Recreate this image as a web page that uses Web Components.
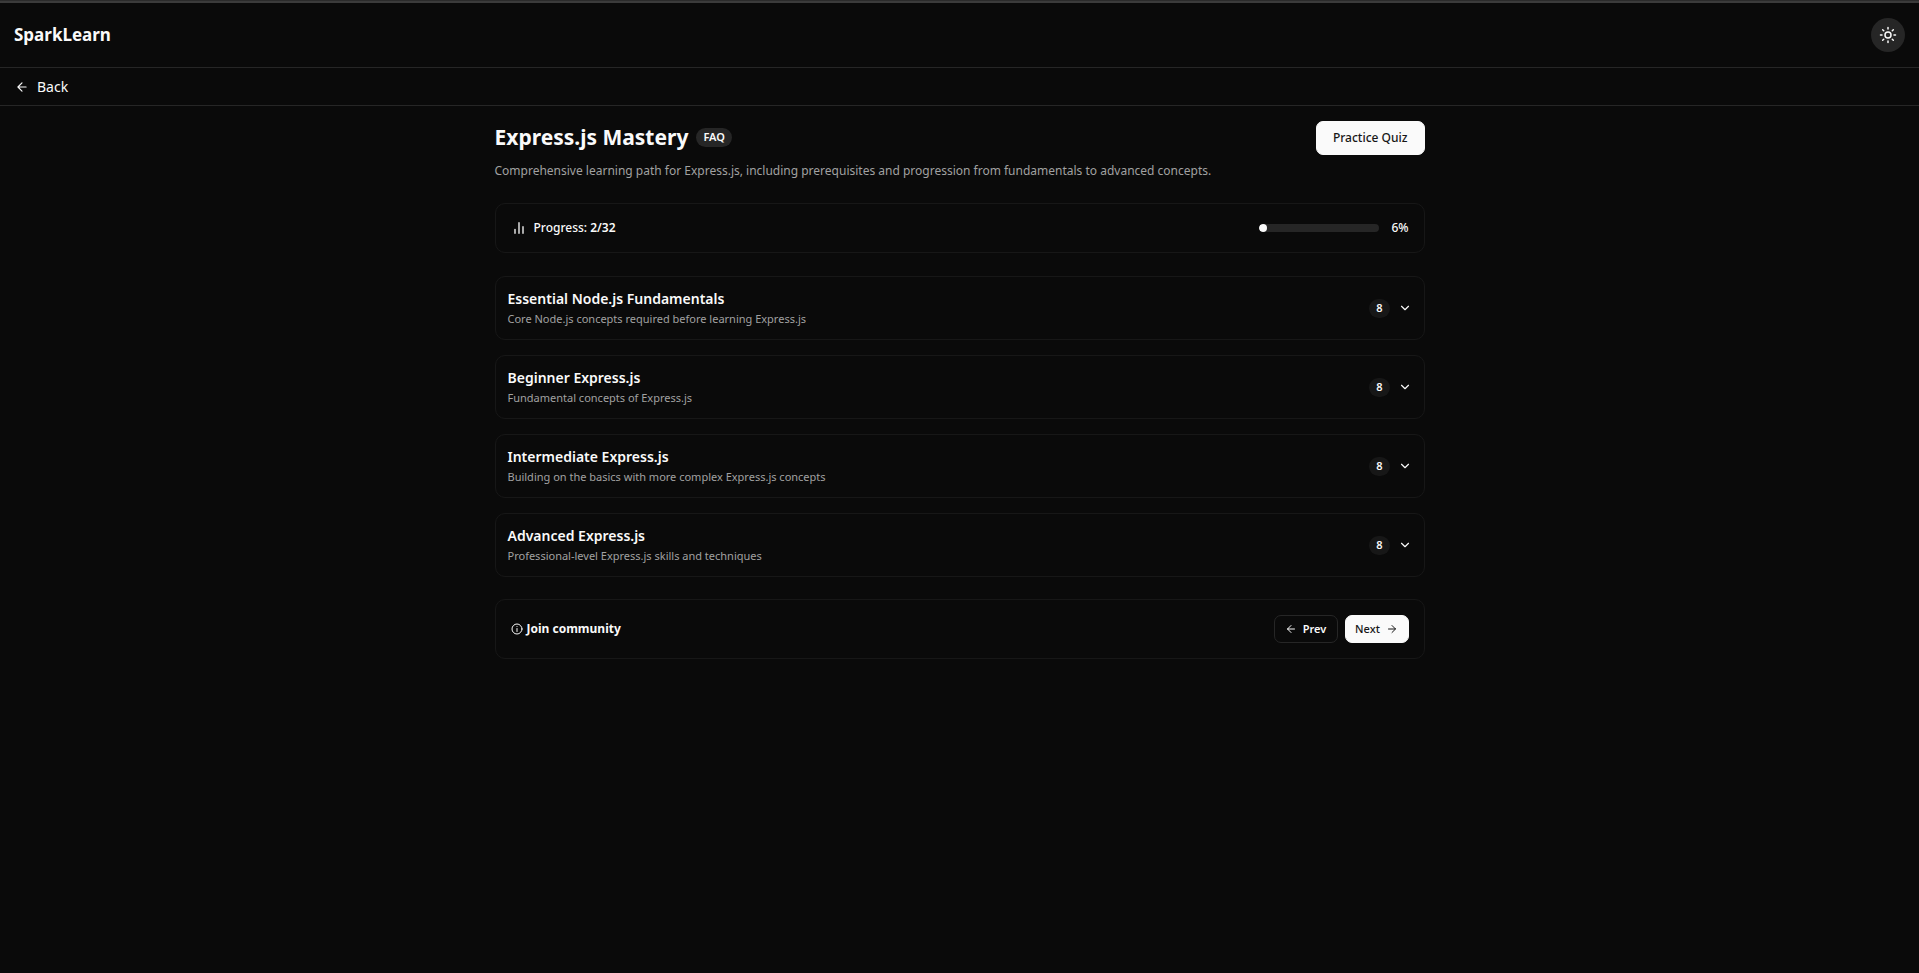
<!DOCTYPE html>
<html lang="en">
<head>
<meta charset="utf-8">
<meta name="viewport" content="width=device-width, initial-scale=1">
<title>SparkLearn</title>
<style>
	:root {
		--bg: #0a0a0a;
		--fg: #fafafa;
		--muted: #a1a1a1;
		--line: #262626;
		--card-line: #171717;
		--chip: #262626;
	}

	body {
		margin: 0;
		min-height: 100vh;
		background: var(--bg);
		color: var(--fg);
		font: 12px/18px "Noto Sans", "Open Sans", sans-serif;
	}
</style>
</head>
<body>
<learn-app></learn-app>

<script>
const icons = {
	sun: '<circle cx="12" cy="12" r="4"/><path d="M12 2v2M12 20v2M4.9 4.9l1.4 1.4M17.7 17.7l1.4 1.4M2 12h2M20 12h2M6.3 17.7l-1.4 1.4M19.1 4.9l-1.4 1.4"/>',
	left: '<path d="m12 19-7-7 7-7M19 12H5"/>',
	right: '<path d="M5 12h14M12 5l7 7-7 7"/>',
	down: '<path d="m6 9 6 6 6-6"/>',
	chart: '<path d="M6 20v-6M12 20V4M18 20V10"/>',
	info: '<circle cx="12" cy="12" r="10"/><path d="M12 17v-6M12 7h.01"/>'
};

function attach(el, html)
{
	el.attachShadow({ mode: 'open' }).innerHTML = html;
}

customElements.define('ui-icon', class extends HTMLElement
{
	connectedCallback()
	{
		const size = this.getAttribute('size') || 14;

		attach(this, `
			<style>
				:host {
					display: inline-flex;
					flex: none;
				}
			</style>
			<svg width="${size}" height="${size}" viewBox="0 0 24 24" fill="none" stroke="currentColor" stroke-width="2" stroke-linecap="round" stroke-linejoin="round" aria-hidden="true">${icons[this.getAttribute('name')]}</svg>
		`);
	}
});

customElements.define('ui-button', class extends HTMLElement
{
	connectedCallback()
	{
		attach(this, `
			<style>
				:host {
					display: inline-flex;
					flex: none;
				}

				button {
					display: inline-flex;
					align-items: center;
					justify-content: center;
					gap: 6px;
					height: 34px;
					padding: 0 16px;
					border: 1px solid var(--fg);
					border-radius: 7px;
					background: var(--fg);
					color: #171717;
					font: inherit;
					font-weight: 500;
					cursor: pointer;
				}

				:host([small]) button {
					min-width: 64px;
					height: 28px;
					padding: 0 8px;
					font-size: 11px;
				}

				:host([outline]) button {
					border-color: var(--line);
					background: var(--bg);
					color: var(--fg);
					font-weight: 600;
				}
			</style>
			<button type="button"><slot></slot></button>
		`);
	}
});

customElements.define('ui-badge', class extends HTMLElement
{
	connectedCallback()
	{
		attach(this, `
			<style>
				:host {
					display: inline-flex;
					align-items: center;
					height: 19px;
					padding: 0 7px;
					border-radius: 10px;
					background: var(--chip);
					font-size: 11px;
					font-weight: 600;
				}

				:host([dim]) {
					background: #171717;
				}
			</style>
			<slot></slot>
		`);
	}
});

customElements.define('ui-card', class extends HTMLElement
{
	connectedCallback()
	{
		attach(this, `
			<style>
				:host {
					display: flex;
					align-items: center;
					justify-content: space-between;
					gap: 16px;
					padding: 15px;
					border: 1px solid var(--card-line);
					border-radius: 10px;
				}
			</style>
			<slot></slot>
		`);
	}
});

customElements.define('site-header', class extends HTMLElement
{
	connectedCallback()
	{
		attach(this, `
			<style>
				:host {
					display: block;
					border-top: 1px solid #2b2b2b;
				}

				header {
					display: flex;
					align-items: center;
					justify-content: space-between;
					height: 64px;
					padding: 0 14px;
					border-top: 2px solid #3b3b3b;
					border-bottom: 1px solid var(--line);
				}

				.logo {
					color: var(--fg);
					font-size: 17px;
					font-weight: 700;
					line-height: 24px;
					text-decoration: none;
				}

				button {
					display: flex;
					align-items: center;
					justify-content: center;
					width: 34px;
					height: 34px;
					padding: 0;
					border: 0;
					border-radius: 50%;
					background: var(--chip);
					color: var(--fg);
					cursor: pointer;
				}

				nav {
					display: flex;
					align-items: center;
					height: 37px;
					padding: 0 15px;
					border-bottom: 1px solid var(--line);
				}

				nav a {
					display: flex;
					align-items: center;
					gap: 8px;
					color: var(--fg);
					font-size: 14px;
					text-decoration: none;
				}
			</style>
			<header>
				<a class="logo" href="#">SparkLearn</a>
				<button type="button" aria-label="Toggle theme"><ui-icon name="sun" size="18"></ui-icon></button>
			</header>
			<nav>
				<a href="#"><ui-icon name="left"></ui-icon>Back</a>
			</nav>
		`);
	}
});

customElements.define('course-progress', class extends HTMLElement
{
	connectedCallback()
	{
		const done = parseInt(this.getAttribute('done'));
		const total = parseInt(this.getAttribute('total'));
		const percent = Math.round(done / total * 100);

		attach(this, `
			<style>
				:host {
					display: block;
				}

				.label, .meter {
					display: flex;
					align-items: center;
					font-weight: 500;
				}

				.label {
					gap: 7px;
				}

				.meter {
					gap: 12px;
				}

				b {
					font-weight: 600;
				}

				.bar {
					width: 120px;
					height: 8px;
					border-radius: 4px;
					background: var(--chip);
					overflow: hidden;
				}

				.fill {
					width: ${percent}%;
					height: 100%;
					border-radius: 4px;
					background: var(--fg);
				}
			</style>
			<ui-card>
				<div class="label"><ui-icon name="chart" size="16"></ui-icon><span>Progress: <b>${done}/${total}</b></span></div>
				<div class="meter">
					<div class="bar" role="progressbar" aria-label="Progress" aria-valuenow="${percent}"><div class="fill"></div></div>
					<span>${percent}%</span>
				</div>
			</ui-card>
		`);
	}
});

customElements.define('course-section', class extends HTMLElement
{
	connectedCallback()
	{
		attach(this, `
			<style>
				:host {
					display: block;
				}

				button {
					display: flex;
					align-items: center;
					justify-content: space-between;
					width: 100%;
					height: 64px;
					padding: 0 12px;
					border: 1px solid var(--card-line);
					border-radius: 10px;
					background: none;
					color: var(--fg);
					font: inherit;
					text-align: left;
					cursor: pointer;
				}

				.text {
					display: grid;
				}

				.title {
					font-size: 14px;
					font-weight: 600;
					line-height: 22px;
				}

				.info {
					color: var(--muted);
					font-size: 11px;
					line-height: 18px;
				}

				.side {
					display: flex;
					align-items: center;
					gap: 8px;
				}
			</style>
			<button type="button" aria-expanded="false">
				<span class="text">
					<span class="title">${this.getAttribute('heading')}</span>
					<span class="info"><slot></slot></span>
				</span>
				<span class="side"><ui-badge dim>${this.getAttribute('count')}</ui-badge><ui-icon name="down"></ui-icon></span>
			</button>
		`);
	}
});

customElements.define('learn-app', class extends HTMLElement
{
	connectedCallback()
	{
		attach(this, `
			<style>
				:host {
					display: block;
				}

				main {
					box-sizing: border-box;
					max-width: 960px;
					margin: 0 auto;
					padding: 15px;
				}

				.intro {
					display: flex;
					align-items: flex-start;
					justify-content: space-between;
					gap: 16px;
					margin-bottom: 23px;
				}

				.name {
					display: flex;
					align-items: center;
					gap: 8px;
				}

				h1 {
					margin: 0;
					font-size: 21px;
					font-weight: 700;
					line-height: 32px;
				}

				p {
					margin: 8px 0 0;
					color: var(--muted);
					line-height: 19px;
				}

				.sections {
					display: grid;
					gap: 15px;
					margin: 23px 0 22px;
				}

				.join {
					display: flex;
					align-items: center;
					gap: 4px;
					color: var(--fg);
					font-weight: 700;
					text-decoration: none;
				}

				.pager {
					display: flex;
					gap: 7px;
				}
			</style>
			<site-header></site-header>
			<main>
				<div class="intro">
					<div>
						<div class="name"><h1>Express.js Mastery</h1><ui-badge>FAQ</ui-badge></div>
						<p>Comprehensive learning path for Express.js, including prerequisites and progression from fundamentals to advanced concepts.</p>
					</div>
					<ui-button>Practice Quiz</ui-button>
				</div>
				<course-progress done="2" total="32"></course-progress>
				<div class="sections">
					<course-section heading="Essential Node.js Fundamentals" count="8">Core Node.js concepts required before learning Express.js</course-section>
					<course-section heading="Beginner Express.js" count="8">Fundamental concepts of Express.js</course-section>
					<course-section heading="Intermediate Express.js" count="8">Building on the basics with more complex Express.js concepts</course-section>
					<course-section heading="Advanced Express.js" count="8">Professional-level Express.js skills and techniques</course-section>
				</div>
				<ui-card>
					<a class="join" href="#"><ui-icon name="info" size="12"></ui-icon>Join community</a>
					<div class="pager">
						<ui-button small outline><ui-icon name="left" size="12"></ui-icon>Prev</ui-button>
						<ui-button small>Next<ui-icon name="right" size="12"></ui-icon></ui-button>
					</div>
				</ui-card>
			</main>
		`);
	}
});
</script>
</body>
</html>
